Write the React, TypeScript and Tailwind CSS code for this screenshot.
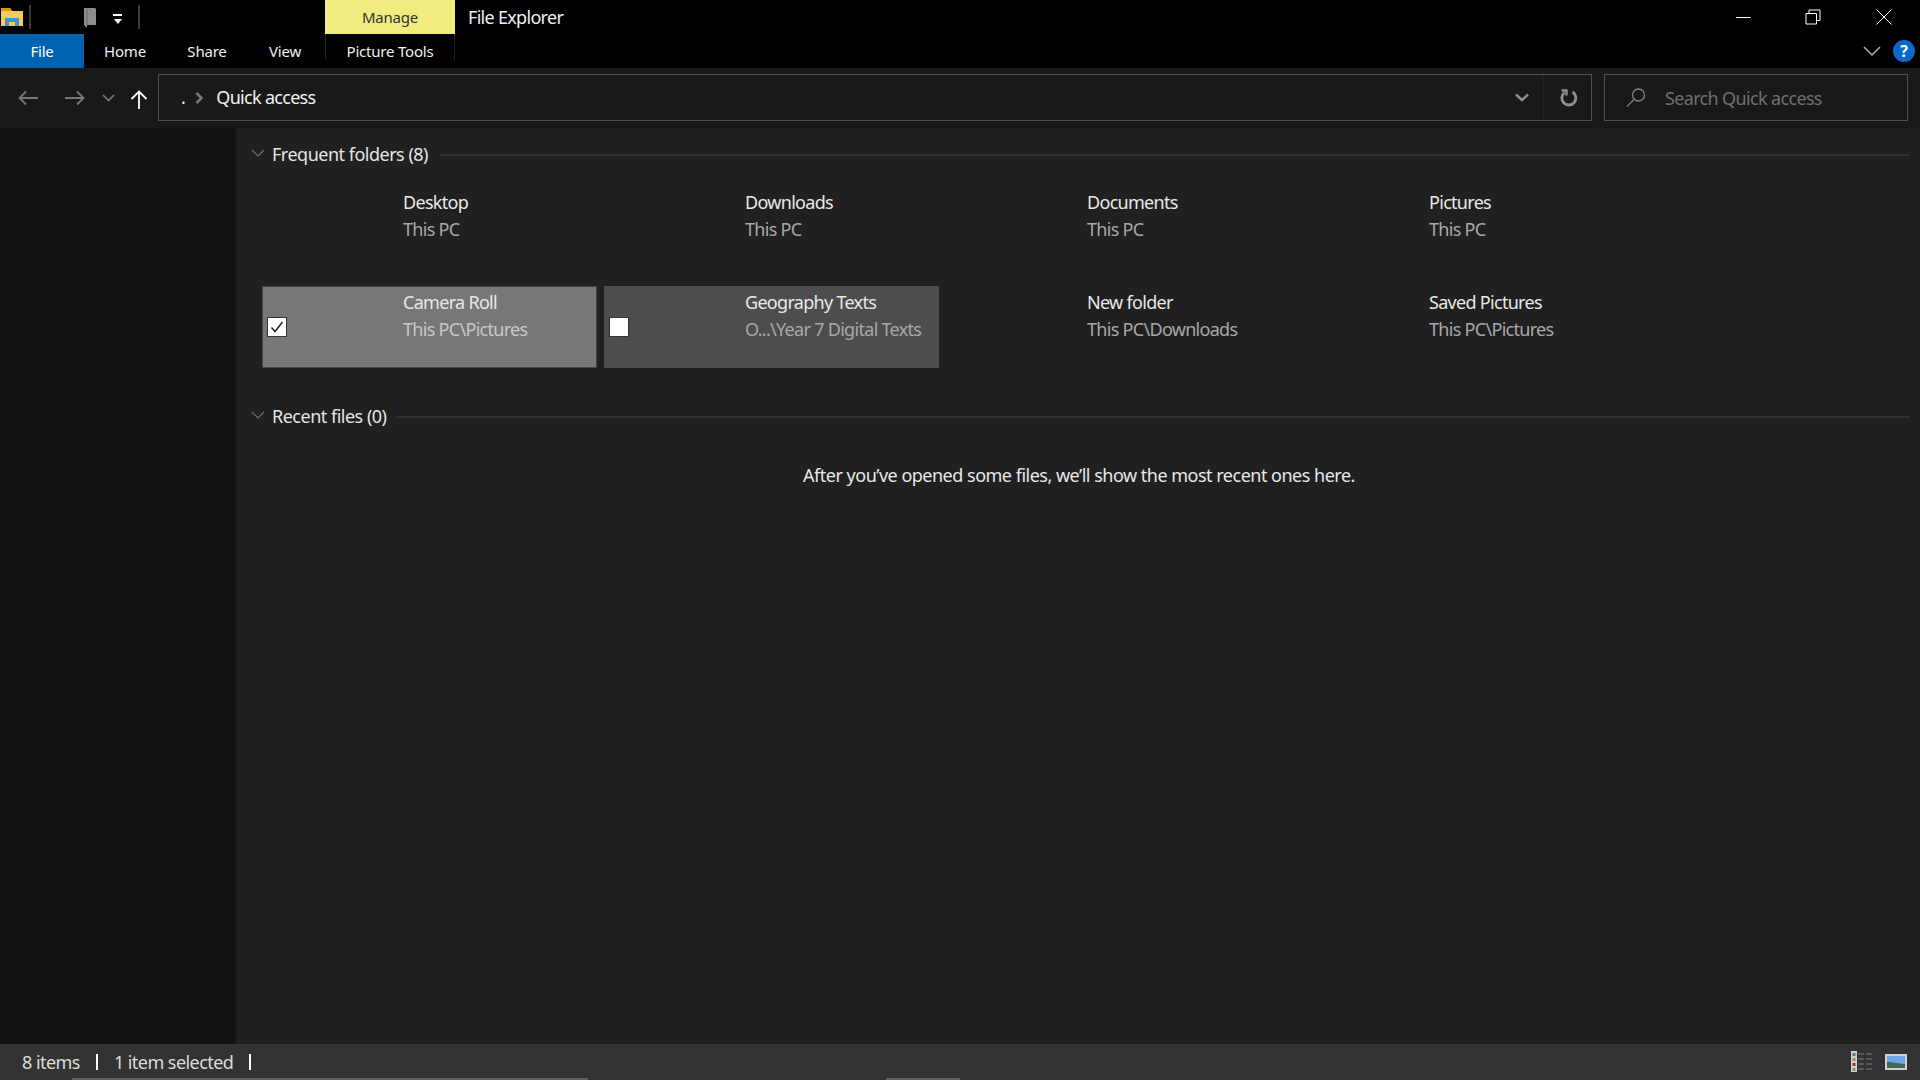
import React from "react";

const frequent = [
  { name: "Desktop", path: "This PC" },
  { name: "Downloads", path: "This PC" },
  { name: "Documents", path: "This PC" },
  { name: "Pictures", path: "This PC" },
  { name: "Camera Roll", path: "This PC\\Pictures", state: "checked" },
  { name: "Geography Texts", path: "O...\\Year 7 Digital Texts", state: "hover" },
  { name: "New folder", path: "This PC\\Downloads" },
  { name: "Saved Pictures", path: "This PC\\Pictures" },
];

const SectionHeader = ({ title }: { title: string }) => (
  <div className="flex items-center h-[30px]">
    <svg width="14" height="8" viewBox="0 0 14 8" className="ml-[13px] mb-1 shrink-0" fill="none" stroke="#6e6e6e" strokeWidth="1.2">
      <path d="M1 1l6 6 6-6" />
    </svg>
    <span className="ml-[7px] mb-[2px] text-[18px] text-[#e6e6e6] whitespace-nowrap">{title}</span>
    <div className="flex-1 h-[2px] bg-[#2e2e2e] ml-[11px] mr-[10px]"></div>
  </div>
);

const Tile = ({ name, path, state }: { name: string; path: string; state?: string }) => (
  <div
    className={`h-[82px] flex items-start relative ${
      state === "checked" ? "bg-[#777777] shadow-[inset_0_0_0_1px_#444444]" : state === "hover" ? "bg-[#4d4d4d]" : ""
    }`}
  >
    {state && (
      <div className="absolute left-[5px] top-[31px] w-[20px] h-[20px] bg-white border border-[#333333] flex items-center justify-center">
        {state === "checked" && (
          <svg width="14" height="12" viewBox="0 0 14 12" fill="none" stroke="#222222" strokeWidth="1.5">
            <path d="M1.5 6.5l3.5 4 7.5-9.5" />
          </svg>
        )}
      </div>
    )}
    <div className="pl-[141px] pt-[3px] flex flex-col whitespace-nowrap tracking-[-0.7px]">
      <span className="text-[18px] leading-[27px] text-[#e8e8e8]">{name}</span>
      <span className={`text-[18px] leading-[27px] ${state === "checked" ? "text-[#c8c8c8]" : "text-[#a8a8a8]"}`}>{path}</span>
    </div>
  </div>
);

export default function App() {
  return (
    <div className="h-screen w-screen overflow-hidden flex flex-col bg-[#202020] font-['Noto_Sans',sans-serif] tracking-[-0.5px]">
      {/* title row */}
      <div className="h-[34px] bg-black flex items-center shrink-0 relative">
        <svg width="24" height="20" viewBox="0 0 24 20" className="ml-0 shrink-0">
          <path d="M1 1h9l2 3h11v15H1z" fill="#f4c95d" />
          <path d="M1 1h9l2 3H1z" fill="#d99a00" />
          <path d="M5 11h14v8h-4v-4H9v4H5z" fill="#3f93d8" />
        </svg>
        <div className="ml-[5px] w-[2px] h-[24px] bg-[#3a3a3a]"></div>
        <svg width="15" height="21" viewBox="0 0 15 21" className="ml-[52px] shrink-0">
          <path d="M1 1h11l1 1v16H4v3l-3-3z" fill="#8d8d8d" />
          <path d="M4 2v16" stroke="#6a6a6a" />
        </svg>
        <div className="ml-[15px] flex flex-col items-center gap-[3px] mt-[4px]">
          <div className="w-[9px] h-[1.5px] bg-white"></div>
          <div className="w-0 h-0 border-l-[4.5px] border-r-[4.5px] border-t-[5px] border-l-transparent border-r-transparent border-t-white"></div>
        </div>
        <div className="ml-[16px] w-[2px] h-[24px] bg-[#3a3a3a]"></div>
        <div className="ml-[185px] w-[130px] h-[34px] bg-[#f0ec80] flex items-center justify-center text-[15px] tracking-[-0.2px] text-[#333333]">
          Manage
        </div>
        <span className="ml-[13px] text-[18px] tracking-[-0.7px] text-[#f0f0f0]">File Explorer</span>
        <div className="ml-auto flex items-center">
          <div className="w-[15px] h-px bg-white mr-[54px]"></div>
          <svg width="16" height="16" viewBox="0 0 16 16" className="mr-[55px]" fill="none" stroke="#ffffff" strokeWidth="1">
            <path d="M1 4.5h10.5V15H1z" />
            <path d="M4 4.5V1h11v10.5h-3.5" />
          </svg>
          <svg width="16" height="16" viewBox="0 0 16 16" className="mr-[28px]" fill="none" stroke="#ffffff" strokeWidth="1">
            <path d="M.5.5l15 15M15.500.5l-15 15" />
          </svg>
        </div>
      </div>

      {/* ribbon tabs */}
      <div className="h-[34px] bg-black flex items-stretch shrink-0 text-[15px] tracking-[-0.2px] text-[#f0f0f0]">
        <div className="w-[84px] bg-[#0063b1] flex items-center justify-center text-white">File</div>
        <div className="w-[82px] flex items-center justify-center">Home</div>
        <div className="w-[82px] flex items-center justify-center">Share</div>
        <div className="w-[77px] pr-[3px] flex items-center justify-center">View</div>
        <div className="w-[130px] mb-[8px] border-x border-[#222222] flex items-center justify-center">
          <span className="mt-[8px]">Picture Tools</span>
        </div>
        <div className="ml-auto flex items-center mr-[5px]">
          <svg width="18" height="10" viewBox="0 0 18 10" className="mr-[12px]" fill="none" stroke="#b0b0b0" strokeWidth="1.5">
            <path d="M1 1l8 8 8-8" />
          </svg>
          <div className="w-[22px] h-[22px] rounded-full bg-[#0b6ac9] flex items-center justify-center text-white text-[16px] font-bold">?</div>
        </div>
      </div>

      {/* nav bar */}
      <div className="h-[60px] bg-[#191919] flex items-start pt-[6px] shrink-0">
        <div className="w-[158px] h-[47px] flex items-center shrink-0">
          <svg width="20" height="16" viewBox="0 0 20 16" className="ml-[18px]" fill="none" stroke="#777777" strokeWidth="1.8">
            <path d="M20 8H1.500M8 1.500L1.500 8 8 14.500" />
          </svg>
          <svg width="20" height="16" viewBox="0 0 20 16" className="ml-[27px]" fill="none" stroke="#777777" strokeWidth="1.8">
            <path d="M0 8h18.500M12 1.500L18.500 8 12 14.500" />
          </svg>
          <svg width="13" height="8" viewBox="0 0 13 8" className="ml-[17px]" fill="none" stroke="#777777" strokeWidth="1.6">
            <path d="M1 1l5.500 5.500L12 1" />
          </svg>
          <svg width="18" height="19" viewBox="0 0 18 19" className="ml-[15px] mt-[4px]" fill="none" stroke="#ffffff" strokeWidth="1.8">
            <path d="M9 19V1.500M1.500 9L9 1.500 16.500 9" />
          </svg>
        </div>
        <div className="w-[1434px] h-[47px] border border-[#505050] flex items-center shrink-0">
          <span className="ml-[22px] text-[18px] text-[#f0f0f0]">.</span>
          <svg width="8" height="12" viewBox="0 0 8 12" className="ml-[10px]" fill="none" stroke="#777777" strokeWidth="2.6">
            <path d="M1.500 1l5 5-5 5" />
          </svg>
          <span className="ml-[13px] text-[18px] tracking-[-0.7px] text-[#f0f0f0]">Quick access</span>
          <div className="ml-auto flex items-center h-full">
            <svg width="14" height="9" viewBox="0 0 14 9" className="mr-[14px]" fill="none" stroke="#909090" strokeWidth="2.4">
              <path d="M1 1.500l6 5.500 6-5.500" />
            </svg>
            <div className="w-[48px] h-full border-l border-[#222222] flex items-center justify-center pl-[2px]">
              <svg width="18" height="18" viewBox="0 0 18 18" fill="none" stroke="#909090" strokeWidth="2.800">
                <path d="M4.500 3.500a7 7 0 1 0 8-.5" />
                <path d="M1.500 1.500h5v5" strokeWidth="2.400" />
              </svg>
            </div>
          </div>
        </div>
        <div className="ml-[12px] w-[304px] h-[47px] border border-[#505050] flex items-center shrink-0">
          <svg width="20" height="19" viewBox="0 0 20 19" className="ml-[21px]" fill="none" stroke="#808080" strokeWidth="1.300">
            <circle cx="12.500" cy="7" r="6" />
            <path d="M8 11.500L1 18.500" />
          </svg>
          <span className="ml-[19px] text-[18px] tracking-[-0.65px] text-[#707070] mt-[2px]">Search Quick access</span>
        </div>
      </div>

      {/* body */}
      <div className="flex-1 flex min-h-0">
        <div className="w-[235px] bg-[#111111] shrink-0"></div>
        <div className="w-[3px] bg-[#1a1a1a] shrink-0"></div>
        <div className="flex-1 pt-[12px] min-w-0">
          <SectionHeader title="Frequent folders (8)" />
          <div className="grid grid-cols-[repeat(4,335px)] gap-x-[7px] gap-y-[18px] pl-[24px] mt-[16px]">
            {frequent.map((f) => (
              <Tile key={f.name} name={f.name} path={f.path} state={f.state} />
            ))}
          </div>
          <div className="mt-[34px]">
            <SectionHeader title="Recent files (0)" />
          </div>
          <p className="text-center text-[18px] text-[#e8e8e8] mt-[30px]">
            After you’ve opened some files, we’ll show the most recent ones here.
          </p>
        </div>
      </div>

      {/* status bar */}
      <div className="h-[36px] bg-[#333333] flex items-center shrink-0 relative text-[18px] tracking-[-0.55px] text-[#dcdcdc]">
        <span className="ml-[22px]">8 items</span>
        <div className="ml-[16px] w-[2px] h-[16px] bg-white"></div>
        <span className="ml-[16px]">1 item selected</span>
        <div className="ml-[16px] w-[2px] h-[16px] bg-white"></div>
        <div className="ml-auto flex items-center mr-[13px]">
          <svg width="22" height="22" viewBox="0 0 22 22" className="mr-[12px]">
            <rect x="0" y="0" width="6" height="21" fill="#d0d0d0" />
            <rect x="1.500" y="2" width="3" height="3" fill="#3f7fb5" />
            <rect x="1.500" y="7" width="3" height="3" fill="#a08a50" />
            <rect x="1.500" y="12" width="3" height="3" fill="#b03020" />
            <rect x="1.500" y="17" width="3" height="3" fill="#70a070" />
            <path d="M7 3h6M15 3h6M7 8h6M15 8h6M7 13h6M15 13h6M7 18h6M15 18h6" stroke="#808080" strokeWidth="1" />
          </svg>
          <svg width="22" height="16" viewBox="0 0 22 16">
            <rect width="22" height="16" fill="#d0d0d0" />
            <rect x="2" y="2" width="18" height="12" fill="#6fa8e8" />
            <path d="M2 8c5 0 9 1 18 2v4H2z" fill="#3e6a5a" />
          </svg>
        </div>
        <div className="absolute left-[72px] bottom-0 w-[516px] h-[2px] bg-[#606060]"></div>
        <div className="absolute left-[886px] bottom-0 w-[74px] h-[2px] bg-[#606060]"></div>
      </div>
    </div>
  );
}
